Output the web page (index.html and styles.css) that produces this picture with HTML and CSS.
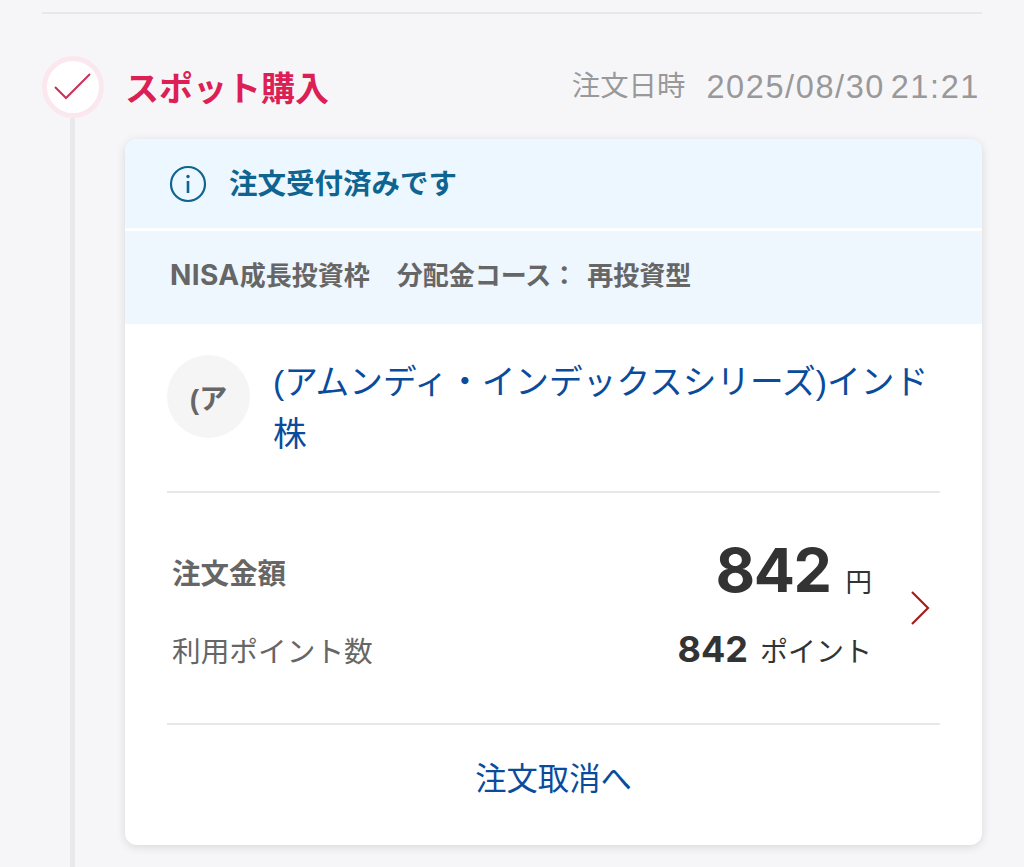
FILE: index.html
```html
<!DOCTYPE html>
<html lang="ja">
<head>
<meta charset="utf-8">
<title>スポット購入</title>
<link rel="stylesheet" href="styles.css">
</head>
<body>
<div class="page">
  <div class="rule"></div>
  <div class="entry-head">
    <div class="mark">
      <svg width="38" height="28" viewBox="0 0 38 28"><path d="M1 14 L12 25 L36 1" fill="none" stroke="#c9305a" stroke-width="2"/></svg>
    </div>
    <h2 class="entry-title">スポット購入</h2>
    <div class="entry-date"><span class="date-label">注文日時</span><span class="date-value">2025/08/30 21:21</span></div>
  </div>
  <div class="entry-body">
    <div class="track"></div>
    <section class="card">
      <div class="notice">
        <svg class="info" width="38" height="38" viewBox="0 0 38 38"><circle cx="19" cy="19" r="17" fill="none" stroke="#0f6490" stroke-width="2.2"/><circle cx="19" cy="11.5" r="1.7" fill="#0f6490"/><path d="M19 16v12" stroke="#0f6490" stroke-width="2.6" fill="none"/></svg>
        <span class="notice-text">注文受付済みです</span>
      </div>
      <div class="meta"><span class="meta-a"><span class="latin">NISA</span>成長投資枠</span><span class="meta-b">分配金コース：</span><span>再投資型</span></div>
      <div class="fund">
        <div class="avatar">(ア</div>
        <a class="fund-name">(アムンディ・インデックスシリーズ)インド株</a>
      </div>
      <div class="amounts">
        <div class="amount-rows">
          <div class="row row-main"><span class="label-bold">注文金額</span><span class="value value-main"><b class="num-lg">842</b><span class="unit-sm">円</span></span></div>
          <div class="row row-sub"><span class="label">利用ポイント数</span><span class="value"><b class="num-md">842</b><span class="unit-md">ポイント</span></span></div>
        </div>
        <svg class="chev" width="20" height="34" viewBox="0 0 20 34"><path d="M2 1 L18 17 L2 33" fill="none" stroke="#a81c1c" stroke-width="2.2"/></svg>
      </div>
      <a class="cancel">注文取消へ</a>
    </section>
  </div>
</div>
</body>
</html>
```
FILE: styles.css
```css
* { box-sizing: border-box; }
html, body { margin: 0; height: 867px; overflow: hidden; }
body {
  background: #f6f6f9;
  font-family: "Liberation Sans", "Noto Sans CJK JP", sans-serif;
}
.page { padding: 12px 42px 0; height: 867px; display: flex; flex-direction: column; }
.rule { height: 2px; background: #e8e8ea; flex: none; }
.entry-head { display: flex; align-items: center; margin-top: 42px; height: 62px; flex: none; }
.mark {
  width: 62px; height: 62px; border-radius: 50%; background: #fff;
  border: 5px solid #fbe8ee; display: flex; align-items: center; justify-content: center; flex: none;
}
.entry-title { margin: 4px 0 0 21px; font-size: 34px; line-height: 40px; font-weight: 700; color: #dc1f55; }
.entry-date { margin-left: auto; margin-right: 2px; display: flex; align-items: center; font-size: 28px; line-height: 40px; color: #999; }
.date-label { font-size: 28.4px; margin-right: 21px; margin-bottom: 3px; }
.date-value { font-size: 32.5px; letter-spacing: 1.6px; word-spacing: -5px; }
.entry-body { display: flex; flex: 1; min-height: 0; }
.track { width: 5px; margin-left: 28px; background: #e9e9ec; flex: none; }
.card {
  margin: 21px 0 22px 50px; flex: 1; height: 706px; background: #fff; border-radius: 12px;
  box-shadow: 0 2px 10px rgba(0,0,0,.12); overflow: hidden; display: flex; flex-direction: column;
}
.notice {
  height: 89px; background: #ecf7ff; display: flex; align-items: center; padding-left: 44px; gap: 22px;
  font-size: 28.5px; font-weight: 700; color: #0f6490; flex: none;
}
.notice-text { margin-bottom: 4px; }
.meta {
  margin-top: 3px; height: 93px; background: #eef6fe; display: flex; align-items: center; padding: 0 0 9px 45px;
  font-size: 26px; font-weight: 700; color: #666; flex: none;
}
.latin { font-family: Inter, "Liberation Sans", sans-serif; font-size: 28px; letter-spacing: .4px; }
.meta-a { margin-right: 27px; }
.meta-b { margin-right: 10px; }
.fund {
  margin: 0 42px; height: 169px; border-bottom: 2px solid #e8e8e8; display: flex; align-items: flex-start;
  padding-top: 31px; flex: none;
}
.avatar {
  width: 83px; height: 83px; border-radius: 50%; background: #f5f5f6; color: #666; font-weight: 700; font-size: 28px;
  display: flex; align-items: center; justify-content: center; flex: none;
}
.fund-name { margin-left: 23px; font-size: 33.7px; line-height: 52px; color: #0a4c9c; margin-top: 1px; width: 670px; }
.amounts {
  margin: 0 42px; height: 232px; border-bottom: 2px solid #e8e8e8; display: flex; align-items: center; flex: none;
}
.amount-rows { width: 700px; margin-left: 5px; padding-top: 5px; }
.row { display: flex; justify-content: space-between; align-items: center; }
.row-main { height: 72px; margin-bottom: 5px; }
.row-sub { height: 72px; }
.label-bold { font-size: 28.5px; font-weight: 700; color: #666; margin-bottom: 2px; }
.label { font-size: 28.7px; color: #666; }
.value { color: #333; display: flex; align-items: baseline; }
.value-main { margin-bottom: 4px; }
.num-lg { font-family: Inter, "Liberation Sans", sans-serif; font-size: 61px; letter-spacing: -1.5px; line-height: 72px; }
.unit-sm { font-size: 26.5px; margin-left: 15px; }
.num-md { font-family: Inter, "Liberation Sans", sans-serif; font-size: 36px; line-height: 48px; }
.unit-md { font-size: 28px; margin-left: 12px; }
.chev { margin-left: 38px; flex: none; }
.cancel { display: flex; flex: 1; align-items: center; justify-content: center; font-size: 31.3px; color: #0a4c9c; padding-bottom: 18px; }
```
